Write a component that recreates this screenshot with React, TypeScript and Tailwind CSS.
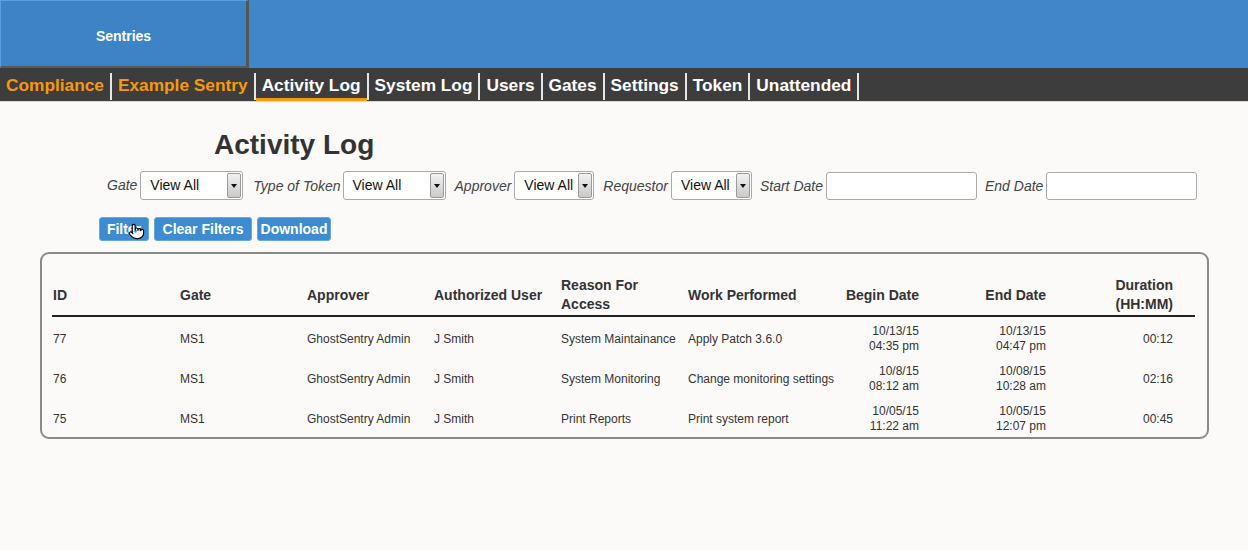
import React from 'react';
import { Pointer } from 'lucide-react';

const navItems = [
  { label: 'Compliance', orange: true },
  { label: 'Example Sentry', orange: true },
  { label: 'Activity Log', active: true },
  { label: 'System Log' },
  { label: 'Users' },
  { label: 'Gates' },
  { label: 'Settings' },
  { label: 'Token' },
  { label: 'Unattended' },
];

const rows = [
  {
    id: '77', gate: 'MS1', approver: 'GhostSentry Admin', user: 'J Smith',
    reason: 'System Maintainance', work: 'Apply Patch 3.6.0',
    begin: ['10/13/15', '04:35 pm'], end: ['10/13/15', '04:47 pm'], duration: '00:12',
  },
  {
    id: '76', gate: 'MS1', approver: 'GhostSentry Admin', user: 'J Smith',
    reason: 'System Monitoring', work: 'Change monitoring settings',
    begin: ['10/8/15', '08:12 am'], end: ['10/08/15', '10:28 am'], duration: '02:16',
  },
  {
    id: '75', gate: 'MS1', approver: 'GhostSentry Admin', user: 'J Smith',
    reason: 'Print Reports', work: 'Print system report',
    begin: ['10/05/15', '11:22 am'], end: ['10/05/15', '12:07 pm'], duration: '00:45',
  },
];

// select con flecha estilo "viejo" del navegador
const FakeSelect = ({ width }: { width: string }) => (
  <div className={`${width} h-[29px] flex items-stretch bg-white border border-[#a9a9a9] rounded-[3px] overflow-hidden`}>
    <span className="flex-1 flex items-center pl-[9px] text-[14px] text-[#111]">View All</span>
    <span className="w-[14px] my-[1px] mr-[1px] flex items-center justify-center border border-[#9a9a9a] rounded-[2px] bg-gradient-to-b from-[#f2f2f2] to-[#c9c9c9]">
      <svg width="6" height="4" viewBox="0 0 6 4">
        <path d="M0 0 L6 0 L3 4 Z" fill="#111" />
      </svg>
    </span>
  </div>
);

const Label = ({ children }: { children: React.ReactNode }) => (
  <span className="italic text-[14px] text-[#444]">{children}</span>
);

const Btn = ({ children, width }: { children: React.ReactNode; width: string }) => (
  <button className={`${width} h-[24px] rounded-[3px] bg-[#3d8bd1] border border-[#6aa6dc] text-white font-bold text-[14px] leading-none`}>
    {children}
  </button>
);

export default function App() {
  return (
    <div className="w-[1248px] h-[550px] overflow-hidden bg-[#fbfaf9] font-['Liberation_Sans',Arial,sans-serif] text-[#333]">
      {/* Barra azul superior */}
      <div className="h-[68px] bg-[#4087ca] flex">
        <div className="w-[249px] h-[68px] pt-[5px] bg-[#3d84c7] border-t border-l border-[#5b9fe2] border-r-[3px] border-r-[#555] border-b-[2px] border-b-[#5a5a5a] flex items-center justify-center">
          <span className="text-white font-bold text-[14px]">Sentries</span>
        </div>
      </div>

      {/* Navegación */}
      <div className="h-[34px] bg-[#3d3d3d] flex items-stretch border-b border-[#d8d8d8]">
        {navItems.map((item) => (
          <div key={item.label} className="flex items-stretch">
            <div
              className={`relative flex items-center pt-[2px] px-[6px] text-[17.3px] font-bold ${item.orange ? 'text-[#f59a0c]' : 'text-white'}`}
            >
              {item.label}
              {item.active && <span className="absolute left-0 right-0 bottom-[0px] h-[3px] bg-[#f59a0c]" />}
            </div>
            <div className="w-[2px] mt-[5px] mb-[1px] bg-[#e6e6e6]" />
          </div>
        ))}
      </div>

      {/* Contenido */}
      <div className="pt-[27px]">
        <h1 className="ml-[214px] text-[28px] leading-[32px] font-bold text-[#333]">Activity Log</h1>

        <div className="mt-[10px] ml-[107px] flex items-center">
          <Label>Gate</Label>
          <div className="ml-[3px]"><FakeSelect width="w-[103px]" /></div>
          <div className="ml-[10px]"><Label>Type of Token</Label></div>
          <div className="ml-[2px]"><FakeSelect width="w-[103px]" /></div>
          <div className="ml-[9px]"><Label>Approver</Label></div>
          <div className="ml-[3px]"><FakeSelect width="w-[80px]" /></div>
          <div className="ml-[9px]"><Label>Requestor</Label></div>
          <div className="ml-[3px]"><FakeSelect width="w-[81px]" /></div>
          <div className="ml-[8px]"><Label>Start Date</Label></div>
          <input className="ml-[3px] w-[151px] h-[28px] bg-white border border-[#a9a9a9] rounded-[3px]" />
          <div className="ml-[8px]"><Label>End Date</Label></div>
          <input className="ml-[3px] w-[151px] h-[28px] bg-white border border-[#a9a9a9] rounded-[3px]" />
        </div>

        <div className="mt-[17px] ml-[99px] flex gap-[5px] relative">
          <Btn width="w-[50px]">Filter</Btn>
          <Btn width="w-[98px]">Clear Filters</Btn>
          <Btn width="w-[74px]">Download</Btn>
          <Pointer className="absolute left-[29px] top-[6px] w-[17px] h-[17px] text-black fill-white" strokeWidth={1.6} />
        </div>

        {/* Tabla */}
        <div className="mt-[11px] ml-[40px] w-[1169px] h-[187px] overflow-hidden border-2 border-[#8a8a8a] rounded-[9px] pl-[10px] pr-[12px] pt-[21px]">
          <div className="grid grid-cols-[repeat(9,127px)] border-b-2 border-[#222] text-[14px] font-bold leading-[19px] text-[#333]">
            {['ID', 'Gate', 'Approver', 'Authorized User', 'Reason For Access', 'Work Performed'].map((h) => (
              <div key={h} className="h-[40px] flex items-center pl-[1px] pr-[4px]">{h}</div>
            ))}
            {['Begin Date', 'End Date', 'Duration (HH:MM)'].map((h) => (
              <div key={h} className="h-[40px] flex items-center justify-end text-right pr-[22px] pl-[2px]">{h}</div>
            ))}
          </div>
          <div className="pt-[2px]">
            {rows.map((r) => (
              <div key={r.id} className="grid grid-cols-[repeat(9,127px)] h-[40px] text-[12px] text-[#333]">
                {[r.id, r.gate, r.approver, r.user, r.reason, r.work].map((c, i) => (
                  <div key={i} className="flex items-center pl-[1px] whitespace-nowrap">{c}</div>
                ))}
                <div className="flex flex-col justify-center items-end pr-[22px] leading-[15px]">
                  <span>{r.begin[0]}</span>
                  <span>{r.begin[1]}</span>
                </div>
                <div className="flex flex-col justify-center items-end pr-[22px] leading-[15px]">
                  <span>{r.end[0]}</span>
                  <span>{r.end[1]}</span>
                </div>
                <div className="flex items-center justify-end pr-[22px]">{r.duration}</div>
              </div>
            ))}
          </div>
        </div>
      </div>
    </div>
  );
}
